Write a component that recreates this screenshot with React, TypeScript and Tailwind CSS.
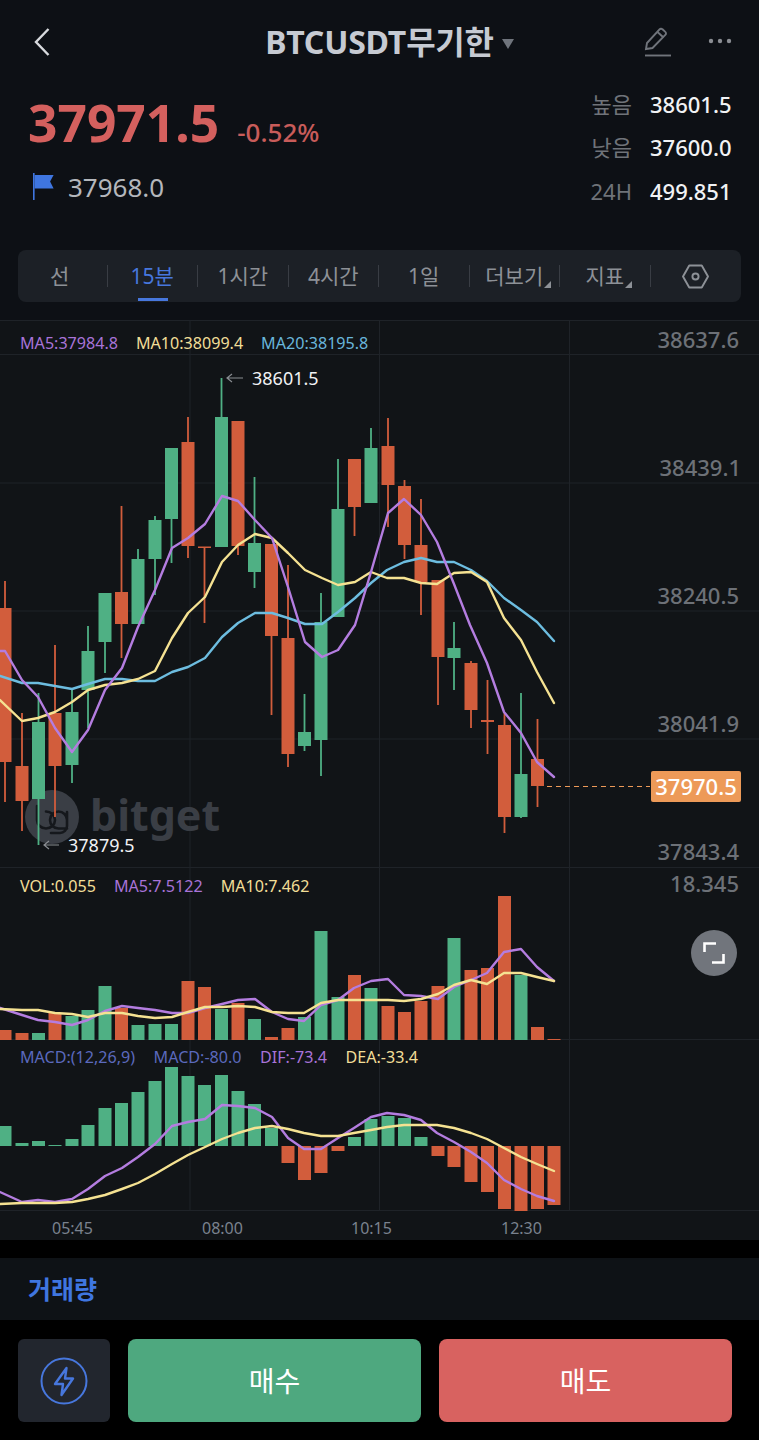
import React from "react";

const GREEN = "#4fb084";
const RED = "#d25d3c";
const PURPLE = "#b47de0";
const YELLOW = "#f5e292";
const BLUE = "#6dbde0";

// [centre x, up?, bodyTop, bodyBottom, wickTop, wickBottom]
type C = [number, 0 | 1, number, number, number, number];
const candles: C[] = [
  [5, 0, 608, 762, 581, 802],
  [22, 0, 766, 801, 713, 831],
  [38.5, 1, 722, 799, 693, 845],
  [55, 0, 713, 766, 645, 817],
  [72, 1, 712, 765, 690, 783],
  [88, 1, 651, 690, 626, 728],
  [105, 1, 593, 642, 593, 673],
  [121.5, 0, 592, 624, 506, 658],
  [138, 1, 559, 624, 549, 624],
  [155, 1, 520, 559, 516, 595],
  [171.5, 1, 448, 519, 448, 563],
  [188, 0, 442, 546, 417, 558],
  [204.5, 0, 546.5, 548, 547, 623],
  [221.5, 1, 417, 547, 378, 547],
  [238, 0, 421, 546, 421, 555],
  [254.5, 1, 543, 572, 477, 588],
  [271.5, 0, 544, 636, 544, 715],
  [288, 0, 638, 754, 565, 767],
  [304.5, 1, 732, 746, 694, 751],
  [321, 1, 622, 740, 593, 776],
  [338, 1, 509, 617, 459, 617],
  [354.5, 0, 459, 507, 459, 536],
  [371, 1, 448, 503, 428, 503],
  [388, 0, 446, 485, 418, 527],
  [404.5, 0, 486, 545, 480, 559],
  [421, 0, 545, 582, 499, 615],
  [438, 0, 580, 657, 580, 705],
  [454, 1, 648, 658, 622, 690],
  [471, 0, 663, 710, 661, 728],
  [487.5, 0, 720, 722, 680, 754],
  [504.5, 0, 725, 817, 713, 833],
  [521, 1, 774, 817, 693, 818],
  [537.5, 0, 759, 786, 719, 807],
];

const xs = candles.map((c) => c[0]).concat([554]);

const ma5 = "0,651 5,651 22,680 38,697 55,728 72,752 88,730 105,690 122,668 138,627 155,590 172,548 188,538 205,524 222,496 238,501 255,520 272,538 288,587 305,642 322,657 338,650 355,625 371,572 388,513 404,499 421,515 437,542 454,584 470,625 487,663 504,712 521,733 537,762 554,777";
const ma10 = "0,700 22,721 38,718 55,712 72,702 88,690 105,685 122,683 138,679 155,671 172,638 188,613 205,597 222,562 238,545 255,534 272,538 288,553 305,570 322,578 338,585 355,582 371,572 387,578 404,578 421,583 437,584 454,573 471,572 487,582 504,618 521,640 537,672 554,703";
const ma20 = "0,676 22,683 38,683 55,686 72,689 88,684 105,679 122,679 138,681 155,681 172,672 188,667 205,658 222,637 238,623 255,613 272,613 288,618 305,624 322,624 338,612 355,598 371,583 387,570 404,562 421,558 437,562 454,562 471,570 487,581 504,598 521,610 537,622 554,641";

// [x, up?, top]
const vols: [number, 0 | 1, number][] = [
  [5, 0, 1030], [22, 0, 1033], [38.5, 1, 1033], [55, 0, 1013], [72, 1, 1016], [88, 1, 1010], [105, 1, 986],
  [121.5, 0, 1008], [138, 1, 1025], [155, 1, 1024], [171.5, 1, 1024], [188, 0, 981], [204.5, 0, 987],
  [221.5, 1, 1009], [238, 0, 1003], [254.5, 1, 1019], [271.5, 0, 1037], [288, 0, 1028], [304.5, 1, 1017],
  [321, 1, 931], [338, 1, 997], [354.5, 0, 975], [371, 1, 988], [388, 0, 1006], [404.5, 0, 1012],
  [421, 0, 1001], [438, 0, 986], [454, 1, 938], [471, 0, 970], [487.5, 0, 968], [504.5, 0, 896],
  [521, 1, 975], [537.5, 0, 1027], [554, 0, 1039],
];
const volMa5 = "0,1008 22,1015 38,1020 55,1022 72,1025 88,1020 105,1011 122,1006 138,1008 155,1010 172,1013 188,1013 205,1008 222,1004 238,1000 255,999 272,1012 288,1019 304,1021 321,1005 338,1000 354,988 371,981 388,979 404,995 421,996 438,999 454,987 471,980 487,973 504,952 521,949 537,967 554,981";
const volMa10 = "0,1009 22,1010 38,1010 55,1013 72,1014 88,1017 105,1013 122,1013 138,1016 155,1018 172,1017 188,1012 205,1007 222,1007 238,1006 255,1007 272,1012 288,1013 304,1013 321,1003 338,1000 354,1000 371,1000 388,1000 404,1001 421,999 438,994 454,985 471,980 487,984 504,973 521,973 537,977 554,981";

// MACD histogram end (page y); baseline 1146
const macd = [1126, 1143, 1141, 1145, 1139, 1125, 1108, 1103, 1092, 1081, 1067, 1076, 1085, 1075, 1091, 1104, 1128, 1163, 1180, 1173, 1151, 1137, 1119, 1116, 1118, 1137, 1156, 1167, 1182, 1192, 1209, 1211, 1209, 1205];
const dif = "0,1192 22,1202 38,1200 55,1202 72,1199 88,1189 105,1176 122,1168 138,1157 155,1144 172,1126 188,1122 205,1119 222,1105 238,1106 255,1108 272,1117 288,1138 304,1149 321,1149 338,1138 354,1128 371,1117 387,1113 404,1115 421,1120 437,1133 454,1142 471,1152 487,1163 504,1180 521,1189 537,1196 554,1201";
const dea = "0,1204 22,1203 38,1203 55,1203 72,1202 88,1199 105,1195 122,1189 138,1183 155,1174 172,1164 188,1155 205,1147 222,1139 238,1133 255,1128 272,1126 288,1129 304,1133 321,1136 338,1136 354,1133 371,1130 387,1127 404,1125 421,1125 437,1125 454,1128 471,1133 487,1139 504,1148 521,1157 537,1164 554,1171";

function Line({ points, color, width = 2.4 }: { points: string; color: string; width?: number }) {
  return <polyline points={points} fill="none" stroke={color} strokeWidth={width} strokeLinejoin="round" strokeLinecap="round" />;
}

function ChartDrawing() {
  return (
    <svg viewBox="0 320 759 920" className="block w-[759px] h-[920px]">
      {[320.5, 354.5, 483, 611, 739, 867.5, 1039.5, 1210.5].map((y) => (
        <line key={y} x1={0} x2={759} y1={y} y2={y} stroke="#1f2328" strokeWidth={1} />
      ))}
      {[190, 379.5, 569.5].map((x) => (
        <line key={x} x1={x} x2={x} y1={320} y2={1210} stroke="#1f2328" strokeWidth={1} />
      ))}

      {/* Bitget watermark logo */}
      <circle cx={52} cy={817} r={27} fill="#3a3e45" />
      <path d="M37 806v14a9 8.500 0 1 0 9-8.500" fill="none" stroke="#15181c" strokeWidth={2.6} strokeLinecap="round" />
      <path d="M67 820a8.500 8.500 0 1 0-8.500 8.500H67M67 812v14a7 7 0 0 1-7 7h-9" fill="none" stroke="#15181c" strokeWidth={2.6} strokeLinecap="round" strokeLinejoin="round" />

      {candles.map(([x, up, bt, bb, wt, wb], i) => {
        const c = up ? GREEN : RED;
        return (
          <g key={i}>
            <rect x={x - 0.9} y={wt} width={1.8} height={wb - wt} fill={c} />
            <rect x={x - 6.5} y={bt} width={13} height={bb - bt} fill={c} />
          </g>
        );
      })}
      <Line points={ma20} color={BLUE} />
      <Line points={ma10} color={YELLOW} />
      <Line points={ma5} color={PURPLE} />

      <line x1={547} x2={650} y1={786.5} y2={786.5} stroke="#ed9a58" strokeWidth={1.2} strokeDasharray="5 4" />

      {/* extreme arrows */}
      <path d="M243 378H227M232 374l-5 4 5 4" fill="none" stroke="#8a8d92" strokeWidth={1.2} />
      <path d="M59 845H44M49 841l-5 4 5 4" fill="none" stroke="#8a8d92" strokeWidth={1.2} />

      {vols.map(([x, up, top], i) => (
        <rect key={i} x={x - 6.5} y={top} width={13} height={1040 - top} fill={up ? GREEN : RED} />
      ))}
      <Line points={volMa5} color={PURPLE} />
      <Line points={volMa10} color={YELLOW} />

      {macd.map((v, i) => {
        const x = xs[i];
        const up = v < 1146;
        return <rect key={i} x={x - 6.5} y={Math.min(v, 1146)} width={13} height={Math.abs(v - 1146)} fill={up ? GREEN : RED} />;
      })}
      <Line points={dif} color={PURPLE} />
      <Line points={dea} color={YELLOW} />
    </svg>
  );
}

const tabs = ["선", "15분", "1시간", "4시간", "1일", "더보기", "지표"];

function Stat({ label, value }: { label: string; value: string }) {
  return (
    <div className="flex items-center h-[43.5px]">
      <span className="w-[42px] text-right text-[22px] text-[#6f7379] leading-none">{label}</span>
      <span className="ml-[18px] w-[82px] text-[22px] font-medium text-[#f1f2f4] leading-none">{value}</span>
    </div>
  );
}

function AxisLabel({ text, y, right = "right-[20px]" }: { text: string; y: string; right?: string }) {
  return <div className={`absolute ${right} text-[22px] font-medium leading-none text-[#6d7177] ${y}`}>{text}</div>;
}

export default function App() {
  return (
    <div className="w-[759px] h-[1440px] bg-black overflow-hidden font-['Noto_Sans','Noto_Sans_CJK_KR',sans-serif]">
      <div className="bg-[#0d1015] h-[320px]">
        {/* Header */}
        <div className="relative flex items-center justify-center h-[84px]">
          <svg viewBox="0 0 18 30" className="absolute left-[33px] top-[27px] w-[18px] h-[30px]" fill="none" stroke="#d8dade" strokeWidth="2.4">
            <path d="M15.5 2 3 15l12.5 13" />
          </svg>
          <div className="flex items-center ml-[20px]">
            <span className="text-[32px] font-bold leading-none text-[#c6cad2] tracking-[-0.2px]">BTCUSDT무기한</span>
            <svg viewBox="0 0 12 10" className="ml-[8px] mt-[4px] w-[12px] h-[10px]" fill="#6f747c">
              <path d="M0 0h12L6 10z" />
            </svg>
          </div>
          <svg viewBox="0 0 28 30" className="absolute left-[644px] top-[27px] w-[28px] h-[30px]" fill="none" stroke="#70747b" strokeWidth="1.9">
            <path d="M2 22 3 16 15.5 2.5a2 2 0 0 1 3-.2l2.8 2.6a2 2 0 0 1 0 3L8.5 21z" />
            <path d="M13.5 5l6 5.5" />
            <path d="M1 28.5h26" />
          </svg>
          <svg viewBox="0 0 24 6" className="absolute left-[708px] top-[38px] w-[24px] h-[6px]" fill="#8a8d93">
            <circle cx="3" cy="3" r="2.2" />
            <circle cx="12" cy="3" r="2.2" />
            <circle cx="21" cy="3" r="2.2" />
          </svg>
        </div>

        {/* Price block */}
        <div className="flex justify-between h-[150px] pl-[28px] pr-[27px]">
          <div>
            <div className="flex items-baseline mt-[7px] h-[62px]">
              <span className="text-[51.500px] font-bold leading-[62px] text-[#d4605e]">37971.5</span>
              <span className="ml-[18px] text-[26px] leading-none font-medium text-[#c85c5a]">-0.52%</span>
            </div>
            <div className="flex items-center mt-[20px] ml-[5px]">
              <svg viewBox="0 0 21 27" className="w-[21px] h-[27px]">
                <rect x="0" y="0" width="1.6" height="27" fill="#3f76e0" />
                <path d="M1.6 2h19l-3.5 6.5 3.5 7H1.6z" fill="#3f76e0" />
              </svg>
              <span className="ml-[14px] text-[26px] leading-none text-[#b4b7bc]">37968.0</span>
            </div>
          </div>
          <div className="-mt-[2px]">
            <Stat label="높음" value="38601.5" />
            <Stat label="낮음" value="37600.0" />
            <Stat label="24H" value="499.851" />
          </div>
        </div>

        {/* Tabs */}
        <div className="mx-[18px] mt-[16px] h-[52px] rounded-[8px] bg-[#1c2026] flex items-center">
          {tabs.map((t, i) => (
            <div
              key={t}
              className={`relative h-[22px] flex items-center justify-center border-r border-[#393d44] text-[21px] leading-none ${i === 0 ? "w-[89.5px] pr-[5px]" : "w-[90.5px]"} ${i === 1 ? "text-[#4777dd]" : "text-[#8d9197]"}`}
            >
              {t}
              {i === 1 && <span className="absolute left-[30px] top-[33px] w-[30px] h-[3px] bg-[#4777dd]" />}
              {i === 5 && (
                <svg viewBox="0 0 7 7" className="absolute right-[8px] bottom-[-1px] w-[7px] h-[7px]" fill="#8d9197">
                  <path d="M7 0v7H0z" />
                </svg>
              )}
              {i === 6 && (
                <svg viewBox="0 0 7 7" className="absolute right-[18px] bottom-[-1px] w-[7px] h-[7px]" fill="#8d9197">
                  <path d="M7 0v7H0z" />
                </svg>
              )}
            </div>
          ))}
          <div className="flex-1 flex items-center justify-center">
            <svg viewBox="0 0 28 26" className="w-[27px] h-[25px]" fill="none" stroke="#8d9197" strokeWidth="2">
              <path d="M7.5 1.5h13L27 13l-6.500 11.500h-13L1 13z" strokeLinejoin="round" />
              <circle cx="14" cy="13" r="3.200" />
            </svg>
          </div>
        </div>
      </div>

      {/* Chart */}
      <div className="relative h-[920px] bg-[#111417]">
        <ChartDrawing />

        <div className="absolute left-[20px] top-[11px] flex gap-[18px] text-[16.1px] leading-[24px] whitespace-nowrap">
          <span className="text-[#a873d8]">MA5:37984.8</span>
          <span className="text-[#f1de97]">MA10:38099.4</span>
          <span className="text-[#69b6db]">MA20:38195.8</span>
        </div>
        <div className="absolute left-[20px] top-[554px] flex gap-[18px] text-[16.1px] leading-[24px] whitespace-nowrap">
          <span className="text-[#f1de97]">VOL:0.055</span>
          <span className="text-[#a873d8]">MA5:7.5122</span>
          <span className="text-[#f1de97]">MA10:7.462</span>
        </div>
        <div className="absolute left-[20px] top-[725px] flex gap-[18.500px] text-[16.1px] leading-[24px] whitespace-nowrap">
          <span className="text-[#5b69bd]">MACD:(12,26,9)</span>
          <span className="text-[#5b69bd]">MACD:-80.0</span>
          <span className="text-[#a873d8]">DIF:-73.4</span>
          <span className="text-[#f1de97]">DEA:-33.4</span>
        </div>

        <div className="absolute left-[90px] top-[475px] text-[43px] font-bold leading-[40px] text-[#3a3e45]">bitget</div>

        <div className="absolute left-[252px] top-[49px] text-[18px] leading-[18px] text-[#f0f1f3]">38601.5</div>
        <div className="absolute left-[68px] top-[516px] text-[18px] leading-[18px] text-[#f0f1f3]">37879.5</div>

        <AxisLabel text="38637.6" y="top-[8px]" />
        <AxisLabel text="38439.1" y="top-[136px]" right="right-[18px]" />
        <AxisLabel text="38240.5" y="top-[264px]" />
        <AxisLabel text="38041.9" y="top-[392px]" />
        <AxisLabel text="37843.4" y="top-[520px]" />
        <AxisLabel text="18.345" y="top-[552px]" />

        <div className="absolute left-[651px] top-[451px] w-[90px] h-[31px] rounded-[2px] bg-[#ed9a58] flex items-center justify-center pb-[2px] text-[22px] font-medium leading-none text-white">37970.5</div>

        <div className="absolute left-[691px] top-[610px] w-[46px] h-[46px] rounded-full bg-[#71757c] flex items-center justify-center">
          <svg viewBox="0 0 22 22" className="w-[22px] h-[22px]" fill="none" stroke="#fff" strokeWidth="2.6">
            <path d="M1.500 10V1.500H13" />
            <path d="M20.500 12v8.500H9" />
          </svg>
        </div>

        <div className="absolute left-0 right-0 top-[897px] h-[23px]">
          {[
            ["05:45", "left-[52px]"],
            ["08:00", "left-[202px]"],
            ["10:15", "left-[351px]"],
            ["12:30", "left-[501px]"],
          ].map(([t, c]) => (
            <span key={t} className={`absolute ${c} top-0 text-[16px] leading-[22px] text-[#7a828e]`}>{t}</span>
          ))}
        </div>
      </div>

      {/* Volume tab */}
      <div className="mt-[18px] h-[62px] bg-[#0e1216] pl-[28px] flex items-center">
        <span className="text-[25px] font-bold leading-none text-[#3f76e0]">거래량</span>
      </div>

      {/* Footer buttons */}
      <div className="mt-[19px] pl-[18px] pr-[27px] flex gap-[18px] h-[83px]">
        <div className="w-[92px] rounded-[6px] bg-[#22262e] flex items-center justify-center">
          <svg viewBox="0 0 48 48" className="w-[48px] h-[48px]" fill="none" stroke="#4777dd" strokeWidth="2">
            <circle cx="24" cy="24" r="22.500" />
            <path d="M26.500 11 15 27h8l-1.500 11L33 21.500h-8z" strokeLinejoin="round" strokeWidth="2.400" />
          </svg>
        </div>
        <div className="w-[293px] rounded-[8px] bg-[#4ea87f] flex items-center justify-center text-[28px] font-normal leading-none text-white">매수</div>
        <div className="w-[293px] rounded-[8px] bg-[#d86260] flex items-center justify-center text-[28px] font-normal leading-none text-white">매도</div>
      </div>
    </div>
  );
}
